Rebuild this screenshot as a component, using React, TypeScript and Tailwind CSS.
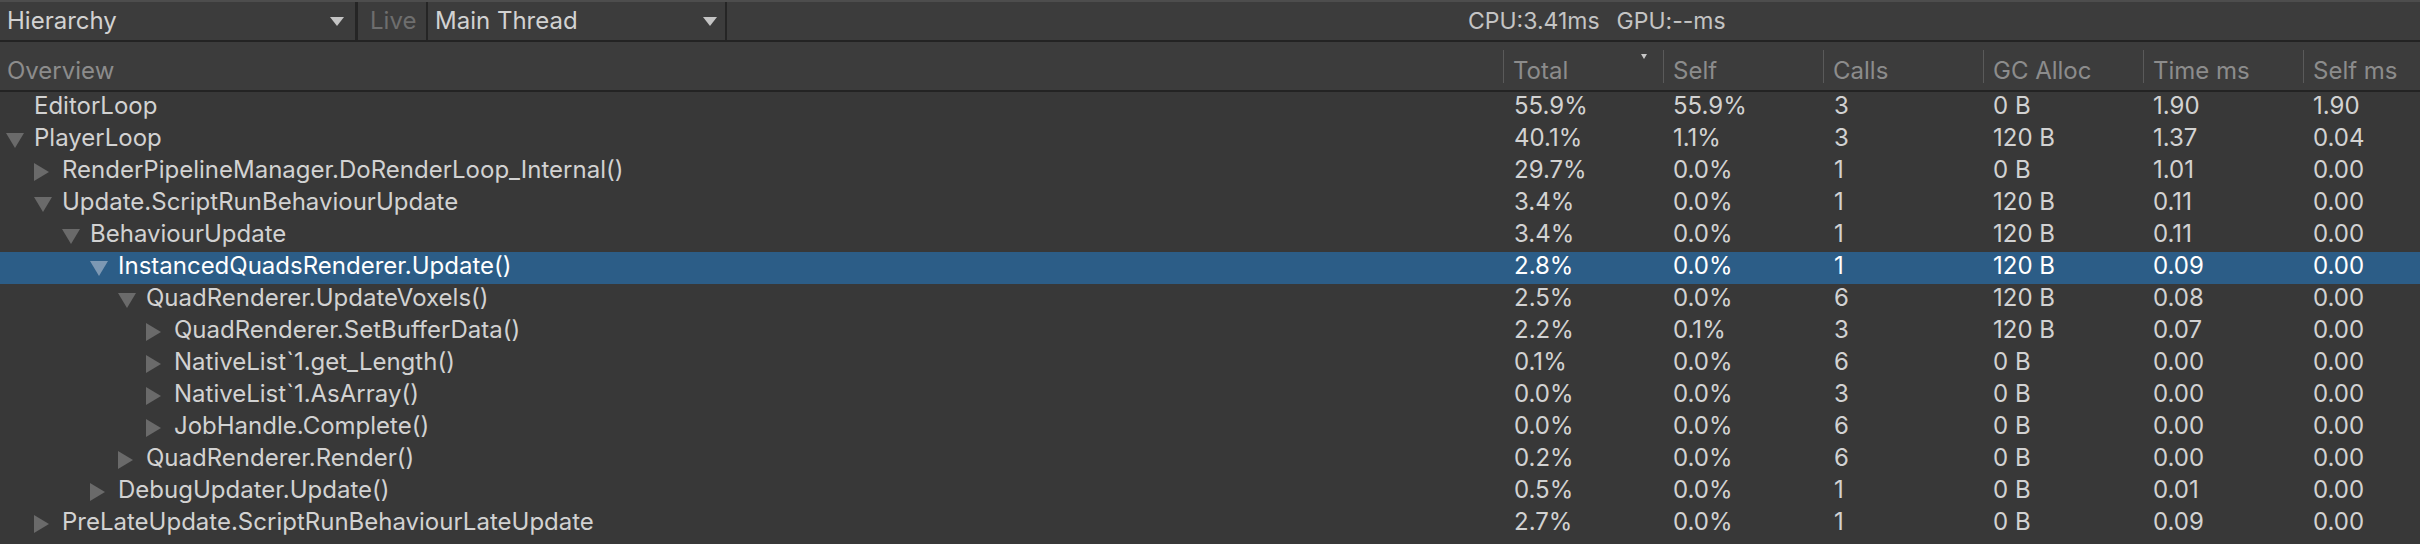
import { ReactNode } from 'react';

type Row = {
  name: string;
  depth: number;
  arrow?: 'down' | 'right';
  total: string;
  self: string;
  calls: string;
  gc: string;
  time: string;
  selfMs: string;
  selected?: boolean;
};

const rows: Row[] = [
  { name: 'EditorLoop', depth: 0, total: '55.9%', self: '55.9%', calls: '3', gc: '0 B', time: '1.90', selfMs: '1.90' },
  { name: 'PlayerLoop', depth: 0, arrow: 'down', total: '40.1%', self: '1.1%', calls: '3', gc: '120 B', time: '1.37', selfMs: '0.04' },
  { name: 'RenderPipelineManager.DoRenderLoop_Internal()', depth: 1, arrow: 'right', total: '29.7%', self: '0.0%', calls: '1', gc: '0 B', time: '1.01', selfMs: '0.00' },
  { name: 'Update.ScriptRunBehaviourUpdate', depth: 1, arrow: 'down', total: '3.4%', self: '0.0%', calls: '1', gc: '120 B', time: '0.11', selfMs: '0.00' },
  { name: 'BehaviourUpdate', depth: 2, arrow: 'down', total: '3.4%', self: '0.0%', calls: '1', gc: '120 B', time: '0.11', selfMs: '0.00' },
  { name: 'InstancedQuadsRenderer.Update()', depth: 3, arrow: 'down', total: '2.8%', self: '0.0%', calls: '1', gc: '120 B', time: '0.09', selfMs: '0.00', selected: true },
  { name: 'QuadRenderer.UpdateVoxels()', depth: 4, arrow: 'down', total: '2.5%', self: '0.0%', calls: '6', gc: '120 B', time: '0.08', selfMs: '0.00' },
  { name: 'QuadRenderer.SetBufferData()', depth: 5, arrow: 'right', total: '2.2%', self: '0.1%', calls: '3', gc: '120 B', time: '0.07', selfMs: '0.00' },
  { name: 'NativeList`1.get_Length()', depth: 5, arrow: 'right', total: '0.1%', self: '0.0%', calls: '6', gc: '0 B', time: '0.00', selfMs: '0.00' },
  { name: 'NativeList`1.AsArray()', depth: 5, arrow: 'right', total: '0.0%', self: '0.0%', calls: '3', gc: '0 B', time: '0.00', selfMs: '0.00' },
  { name: 'JobHandle.Complete()', depth: 5, arrow: 'right', total: '0.0%', self: '0.0%', calls: '6', gc: '0 B', time: '0.00', selfMs: '0.00' },
  { name: 'QuadRenderer.Render()', depth: 4, arrow: 'right', total: '0.2%', self: '0.0%', calls: '6', gc: '0 B', time: '0.00', selfMs: '0.00' },
  { name: 'DebugUpdater.Update()', depth: 3, arrow: 'right', total: '0.5%', self: '0.0%', calls: '1', gc: '0 B', time: '0.01', selfMs: '0.00' },
  { name: 'PreLateUpdate.ScriptRunBehaviourLateUpdate', depth: 1, arrow: 'right', total: '2.7%', self: '0.0%', calls: '1', gc: '0 B', time: '0.09', selfMs: '0.00' },
];

const indent = ['pl-[6px]', 'pl-[34px]', 'pl-[62px]', 'pl-[90px]', 'pl-[118px]', 'pl-[146px]'];

const grid = 'grid grid-cols-[1503px_160px_160px_160px_160px_160px_1fr]';

function DropArrow() {
  return (
    <svg width="14" height="9" viewBox="0 0 14 9" className="shrink-0">
      <polygon points="0,0 14,0 7,9" fill="#c4c4c4" />
    </svg>
  );
}

function TreeArrow({ dir, selected }: { dir: 'down' | 'right'; selected?: boolean }) {
  const fill = selected ? '#7d98b3' : '#6a6a6a';
  return dir === 'down' ? (
    <svg width="18" height="15" viewBox="0 0 18 15">
      <polygon points="0,0 18,0 9,15" fill={fill} />
    </svg>
  ) : (
    <svg width="15" height="18" viewBox="0 0 15 18">
      <polygon points="0,0 15,9 0,18" fill={fill} />
    </svg>
  );
}

function HeaderCell({ children, sorted }: { children: ReactNode; sorted?: boolean }) {
  return (
    <div className="relative flex items-center h-full">
      <div className="w-px h-[33px] bg-[#5a5a5a]" />
      <span className="pl-[9px] pt-[10px]">{children}</span>
      {sorted && (
        <svg width="6" height="5" viewBox="0 0 6 5" className="absolute right-[16px] top-[12px]">
          <polygon points="0,0 6,0 3,5" fill="#c8c8c8" />
        </svg>
      )}
    </div>
  );
}

export default function App() {
  return (
    <div
      className="w-[2420px] h-[544px] overflow-hidden bg-[#383838] text-[24px] leading-none text-[#d2d2d2]"
      style={{ fontFamily: 'Inter, "Noto Sans", sans-serif' }}
    >
      {/* Toolbar */}
      <div className="h-[2px] bg-[#4d4d4d]" />
      <div className="h-[38px] flex bg-[#3c3c3c] border-b-2 border-[#232323] box-content">
        <div className="w-[358px] flex items-center justify-between pl-[7px] pr-[11px] border-r-[3px] border-[#252525]">
          <span>Hierarchy</span>
          <DropArrow />
        </div>
        <div className="w-[70px] flex items-center pl-[12px] text-[#6e6e6e] border-r-2 border-[#252525]">Live</div>
        <div className="w-[299px] flex items-center justify-between pl-[7px] pr-[8px] border-r-2 border-[#252525]">
          <span>Main Thread</span>
          <DropArrow />
        </div>
        <div className="flex items-center pl-[741px] text-[23px] text-[#c4c4c4]">
          <span>CPU:3.41ms</span>
          <span className="ml-[17px]">GPU:--ms</span>
        </div>
      </div>

      {/* Column header */}
      <div className={`${grid} h-[48px] bg-[#3c3c3c] border-b-2 border-[#232323] box-content text-[#8c8c8c]`}>
        <div className="flex items-center pl-[7px] pt-[10px]">Overview</div>
        <HeaderCell sorted>Total</HeaderCell>
        <HeaderCell>Self</HeaderCell>
        <HeaderCell>Calls</HeaderCell>
        <HeaderCell>GC Alloc</HeaderCell>
        <HeaderCell>Time ms</HeaderCell>
        <HeaderCell>Self ms</HeaderCell>
      </div>

      {/* Rows */}
      <div>
        {rows.map((r) => (
          <div
            key={r.name}
            className={`${grid} h-[32px] pb-[4px] items-center ${r.selected ? 'bg-[#2c5d87] text-white' : ''}`}
          >
            <div className={`flex items-center ${indent[r.depth]}`}>
              <div className="w-[28px] flex items-center pt-[4px]">
                {r.arrow && <TreeArrow dir={r.arrow} selected={r.selected} />}
              </div>
              <span>{r.name}</span>
            </div>
            <span className="pl-[11px]">{r.total}</span>
            <span className="pl-[10px]">{r.self}</span>
            <span className="pl-[11px]">{r.calls}</span>
            <span className="pl-[10px]">{r.gc}</span>
            <span className="pl-[10px]">{r.time}</span>
            <span className="pl-[10px]">{r.selfMs}</span>
          </div>
        ))}
      </div>
    </div>
  );
}
